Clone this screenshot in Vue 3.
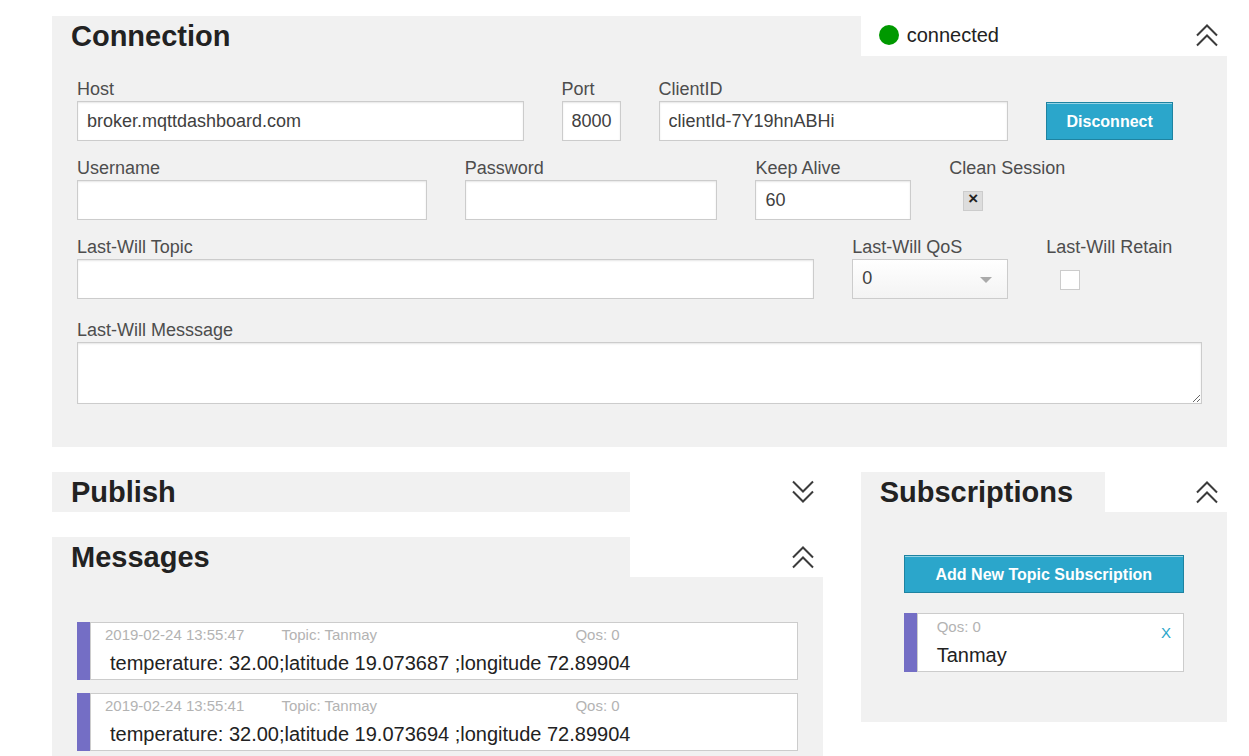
<script setup>
import { ref } from 'vue'

const host = ref('broker.mqttdashboard.com')
const port = ref('8000')
const clientId = ref('clientId-7Y19hnABHi')
const username = ref('')
const password = ref('')
const keepAlive = ref('60')
const cleanSession = ref(true)
const willTopic = ref('')
const willQos = ref('0')
const willRetain = ref(false)
const willMessage = ref('')

const messages = [
  { time: '2019-02-24 13:55:47', topic: 'Tanmay', qos: 0, body: 'temperature: 32.00;latitude 19.073687 ;longitude 72.89904' },
  { time: '2019-02-24 13:55:41', topic: 'Tanmay', qos: 0, body: 'temperature: 32.00;latitude 19.073694 ;longitude 72.89904' },
]
const subscriptions = [{ topic: 'Tanmay', qos: 0 }]
</script>

<template>
  <main class="page">
    <section>
      <header class="head">
        <h2 class="tab">Connection</h2>
        <div class="side side-status">
          <span class="dot"></span>
          <span class="status">connected</span>
          <button class="toggle" type="button" aria-label="Collapse connection">
            <svg viewBox="0 0 22 24" width="22" height="24"><path d="M1 12.5 11 2.5l10 10M1 22.5l10-10 10 10" /></svg>
          </button>
        </div>
      </header>
      <form class="panel form" @submit.prevent>
        <div class="field s5"><label for="host">Host</label><input id="host" v-model="host" type="text" /></div>
        <div class="field s1"><label for="port">Port</label><input id="port" v-model="port" type="text" /></div>
        <div class="field s4"><label for="client">ClientID</label><input id="client" v-model="clientId" type="text" /></div>
        <div class="field s2"><button class="btn disconnect" type="button">Disconnect</button></div>

        <div class="field s4"><label for="user">Username</label><input id="user" v-model="username" type="text" /></div>
        <div class="field s3"><label for="pass">Password</label><input id="pass" v-model="password" type="password" /></div>
        <div class="field s2"><label for="keep">Keep Alive</label><input id="keep" v-model="keepAlive" type="text" /></div>
        <div class="field s3"><label for="clean">Clean Session</label><input id="clean" v-model="cleanSession" type="checkbox" /></div>

        <div class="field s8"><label for="topic">Last-Will Topic</label><input id="topic" v-model="willTopic" type="text" /></div>
        <div class="field s2">
          <label for="qos">Last-Will QoS</label>
          <div class="select">
            <select id="qos" v-model="willQos"><option>0</option><option>1</option><option>2</option></select>
          </div>
        </div>
        <div class="field s2"><label for="retain">Last-Will Retain</label><input id="retain" v-model="willRetain" type="checkbox" /></div>

        <div class="field s12 will"><label for="will">Last-Will Messsage</label><textarea id="will" v-model="willMessage"></textarea></div>
      </form>
    </section>

    <div class="lower">
      <div class="main">
        <section>
          <header class="head">
            <h2 class="tab">Publish</h2>
            <div class="side side-quarter">
              <button class="toggle" type="button" aria-label="Expand publish">
                <svg viewBox="0 0 22 24" width="22" height="24"><path d="M1 1.5l10 10 10-10M1 11.5l10 10 10-10" /></svg>
              </button>
            </div>
          </header>
        </section>
        <section>
          <header class="head">
            <h2 class="tab">Messages</h2>
            <div class="side side-quarter">
              <button class="toggle" type="button" aria-label="Collapse messages">
                <svg viewBox="0 0 22 24" width="22" height="24"><path d="M1 12.5 11 2.5l10 10M1 22.5l10-10 10 10" /></svg>
              </button>
            </div>
          </header>
          <ul class="panel messages">
            <li v-for="m in messages" :key="m.time" class="card">
              <div class="box">
                <div class="meta">
                  <span>{{ m.time }}</span><span>Topic: {{ m.topic }}</span><span>Qos: {{ m.qos }}</span>
                </div>
                <div class="payload">{{ m.body }}</div>
              </div>
            </li>
          </ul>
        </section>
      </div>

      <section>
        <header class="head">
          <h2 class="tab">Subscriptions</h2>
          <div class="side side-third">
            <button class="toggle" type="button" aria-label="Collapse subscriptions">
              <svg viewBox="0 0 22 24" width="22" height="24"><path d="M1 12.5 11 2.5l10 10M1 22.5l10-10 10 10" /></svg>
            </button>
          </div>
        </header>
        <div class="panel subs">
          <button class="btn add" type="button">Add New Topic Subscription</button>
          <ul class="sub-list">
            <li v-for="s in subscriptions" :key="s.topic" class="card">
              <div class="box sub">
                <div>
                  <div class="sub-qos">Qos: {{ s.qos }}</div>
                  <div class="sub-topic">{{ s.topic }}</div>
                </div>
                <a class="remove" href="#">X</a>
              </div>
            </li>
          </ul>
        </div>
      </section>
    </div>
  </main>
</template>

<style>
body {
  margin: 0;
  background: #fff;
}
</style>

<style scoped>
.page,
.page * {
  box-sizing: border-box;
}
.page {
  padding: 16px 22px 0 52px;
  font-family: "Liberation Sans", Arial, sans-serif;
  color: #222;
}
.head {
  display: flex;
  height: 40px;
}
.tab {
  flex: 1;
  margin: 0;
  padding-left: 19px;
  background: #f1f1f1;
  font-size: 29px;
  font-weight: bold;
  line-height: 40px;
}
.side {
  display: flex;
  align-items: center;
  padding: 0 9px 0 18px;
}
.side-status {
  width: calc((100% - 76px) / 3);
  padding-bottom: 2px;
}
.side-quarter {
  width: 25%;
}
.side-third {
  width: 33.333%;
}
.dot {
  width: 20px;
  height: 20px;
  margin-right: 8px;
  border-radius: 50%;
  background: #009900;
}
.status {
  font-size: 20px;
}
.toggle {
  display: block;
  margin-left: auto;
  padding: 0;
  border: 0;
  background: none;
  cursor: pointer;
}
.toggle svg {
  display: block;
  fill: none;
  stroke: #3c3c3c;
  stroke-width: 2;
}
.panel {
  margin: 0;
  background: #f1f1f1;
}
.form {
  display: grid;
  grid-template-columns: repeat(12, minmax(0, 1fr));
  gap: 15px 38px;
  padding: 21px 25px 43px;
}
.field {
  display: flex;
  flex-direction: column;
  align-items: flex-start;
}
.s1 { grid-column: span 1; }
.s2 { grid-column: span 2; }
.s3 { grid-column: span 3; }
.s4 { grid-column: span 4; }
.s5 { grid-column: span 5; }
.s8 { grid-column: span 8; }
.s12 { grid-column: span 12; }
.will {
  margin-top: 4px;
}
label {
  font-size: 18px;
  line-height: 24px;
  color: #4d4d4d;
  white-space: nowrap;
}
input[type="text"],
input[type="password"],
select,
textarea {
  display: block;
  width: 100%;
  height: 40px;
  margin: 0;
  padding: 0 4px 0 9px;
  border: 1px solid #ccc;
  border-radius: 0;
  background: #fff;
  box-shadow: inset 0 1px 2px rgba(0, 0, 0, 0.1);
  color: #404040;
  font-family: inherit;
  font-size: 18px;
  outline: none;
}
textarea {
  height: 62px;
  padding: 9px;
  resize: vertical;
}
.select {
  position: relative;
  width: 100%;
}
select {
  appearance: none;
  padding-bottom: 2px;
  background: linear-gradient(#fff, #f3f3f3);
  box-shadow: none;
}
.select::after {
  content: "";
  position: absolute;
  top: 18px;
  right: 16px;
  border: 6px solid transparent;
  border-top-color: #aaa;
  border-bottom: 0;
  pointer-events: none;
}
input[type="checkbox"] {
  appearance: none;
  display: flex;
  justify-content: center;
  width: 20px;
  height: 20px;
  margin: 11px 0 0 14px;
  border: 1px solid #ccc;
  background: #fff;
}
input[type="checkbox"]:checked {
  background: #ddd;
}
input[type="checkbox"]:checked::before {
  content: "\00d7";
  color: #222;
  font-family: "Liberation Sans", Arial, sans-serif;
  font-size: 17px;
  font-weight: bold;
  line-height: 14px;
}
.btn {
  height: 38px;
  padding: 2px 18px 0;
  border: 1px solid #1e83a1;
  background: #2ba6cb;
  box-shadow: inset 0 1px 0 rgba(255, 255, 255, 0.5);
  color: #fff;
  font-family: inherit;
  font-size: 16px;
  font-weight: bold;
  white-space: nowrap;
  cursor: pointer;
}
.disconnect {
  min-width: 127px;
  margin-top: 25px;
}
.lower {
  display: grid;
  grid-template-columns: minmax(0, 1fr) calc((100% - 76px) / 3);
  gap: 38px;
  align-items: start;
  margin-top: 25px;
}
.main {
  display: grid;
  gap: 25px;
}
.messages {
  display: grid;
  gap: 13px;
  padding: 45px 25px 5px;
  list-style: none;
}
.card {
  padding-left: 13px;
  background: #746ec5;
}
.box {
  border: 1px solid #ccc;
  background: #fff;
}
.meta {
  display: grid;
  grid-template-columns: 3fr 5fr 4fr;
  font-size: 15px;
  line-height: 24px;
  color: #b3b3b3;
}
.meta span {
  padding-left: 14px;
}
.payload {
  padding-left: 19px;
  font-size: 20px;
  line-height: 32px;
  white-space: nowrap;
}
.subs {
  padding: 43px 43px 50px;
}
.add {
  display: block;
  width: 100%;
}
.sub-list {
  margin: 20px 0 0;
  padding: 0;
  list-style: none;
}
.sub {
  display: flex;
  justify-content: space-between;
  padding: 0 12px 0 19px;
}
.sub-qos {
  font-size: 15px;
  line-height: 26px;
  color: #b3b3b3;
}
.sub-topic {
  font-size: 20px;
  line-height: 31px;
}
.remove {
  font-size: 15px;
  line-height: 38px;
  color: #2ba6cb;
  text-decoration: none;
}
</style>
